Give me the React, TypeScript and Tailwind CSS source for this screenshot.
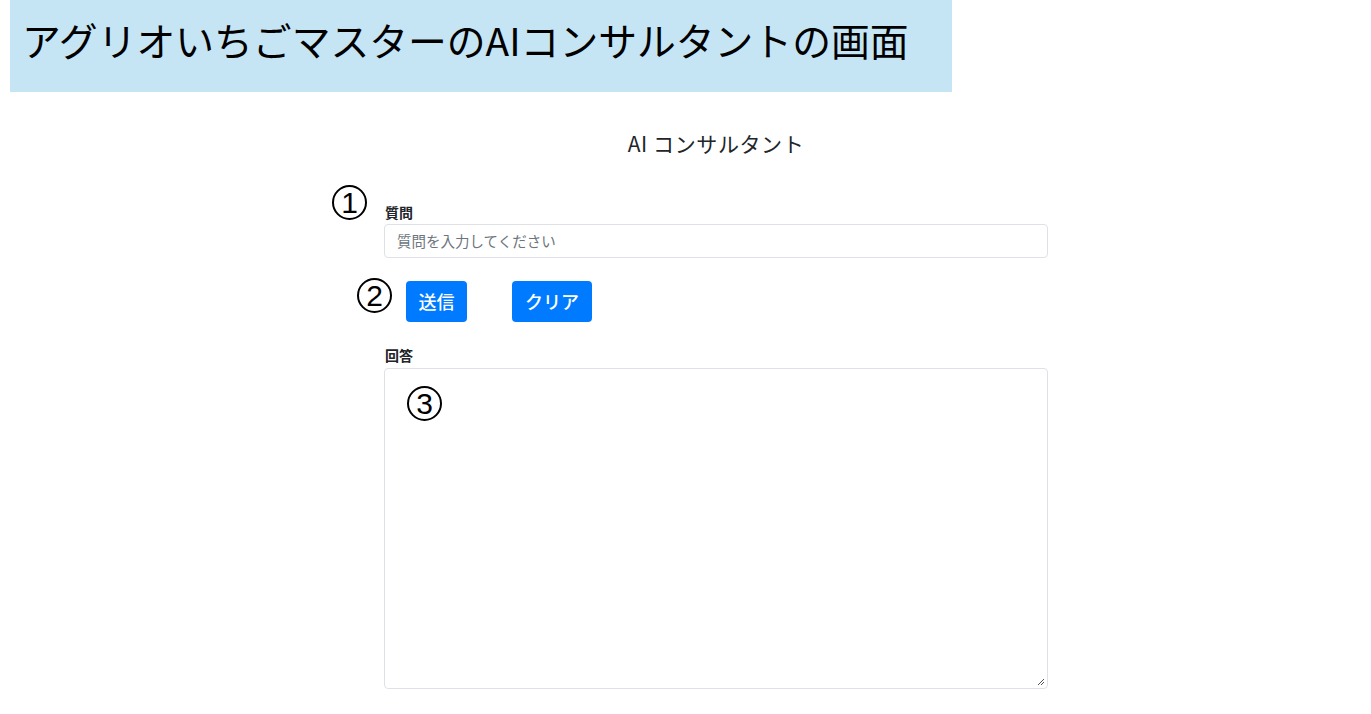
import React from "react";

function Circ({ n, className }: { n: string; className: string }) {
  return (
    <span
      className={`absolute w-[35px] h-[35px] rounded-full border-2 border-black flex items-center justify-center text-[30px] leading-none text-black ${className}`}
      style={{ fontFamily: '"Liberation Sans", Arial, sans-serif' }}
    >
      <span className="mt-[1px]">{n}</span>
    </span>
  );
}

export default function App() {
  const jp = { fontFamily: '"Noto Sans CJK JP", "Noto Sans", sans-serif' };
  return (
    <div className="w-[1371px] h-[714px] bg-white overflow-hidden text-[#212529]" style={jp}>
      <div className="ml-[10px] w-[942px] h-[92px] bg-[#c5e5f5] pl-[12px] pt-[16px]">
        <div className="text-[38.8px] leading-[46px] text-black whitespace-nowrap">
          アグリオいちごマスターのAIコンサルタントの画面
        </div>
      </div>
      <div className="ml-[384px] w-[664px] relative">
        <h1 className="text-center text-[21px] leading-[30px] mt-[36px] text-[#212529] tracking-[0.6px]">
          AI コンサルタント
        </h1>
        <div className="relative mt-[44px]">
          <Circ n="1" className="left-[-52px] top-[-17px]" />
          <label className="block text-[14px] leading-[20px] font-bold mb-[2px] pl-[1px]">質問</label>
          <div className="h-[34px] border border-[#dee2e6] rounded-[4px] flex items-center px-[12px] text-[14.5px] text-[#6c757d]">
            質問を入力してください
          </div>
        </div>
        <div className="relative flex gap-[45px] pl-[22px] mt-[23px]">
          <Circ n="2" className="left-[-27px] top-[-3px]" />
          <button className="h-[41px] px-[12.5px] bg-[#007bff] text-white text-[18px] font-medium rounded-[4px]">送信</button>
          <button className="h-[41px] px-[13px] bg-[#007bff] text-white text-[18px] font-medium rounded-[4px]">クリア</button>
        </div>
        <div className="mt-[23px]">
          <label className="block text-[14px] leading-[20px] font-bold mb-[3px] pl-[1px]">回答</label>
          <div className="relative h-[321px] border border-[#dee2e6] rounded-[4px]">
            <Circ n="3" className="left-[22px] top-[17px]" />
            <svg className="absolute right-[2px] bottom-[2px]" width="8" height="8" viewBox="0 0 8 8">
              <path d="M7 1 L1 7 M7 4 L4 7" stroke="#555" strokeWidth="1" />
            </svg>
          </div>
        </div>
      </div>
    </div>
  );
}
